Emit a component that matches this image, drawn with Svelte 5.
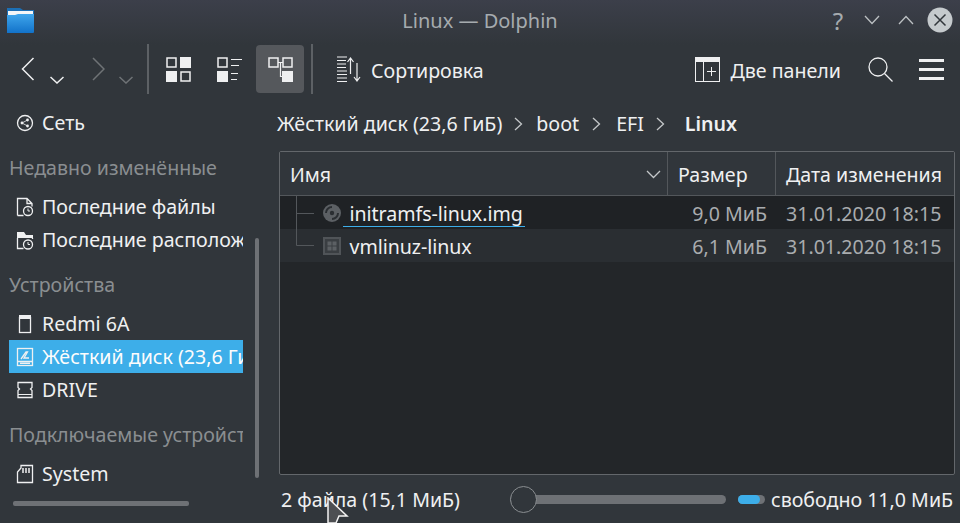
<script>
  const files = [
    { name: 'initramfs-linux.img', size: '9,0 МиБ', date: '31.01.2020 18:15', kind: 'img' },
    { name: 'vmlinuz-linux', size: '6,1 МиБ', date: '31.01.2020 18:15', kind: 'bin' }
  ];
</script>

<div class="window">
  <header class="titlebar">
    <svg class="app-icon" width="27" height="25" viewBox="0 0 27 25">
      <defs>
        <linearGradient id="fold" x1="0" y1="0" x2="0" y2="1">
          <stop offset="0" stop-color="#3fa6ec" />
          <stop offset="1" stop-color="#1272c9" />
        </linearGradient>
      </defs>
      <path d="M0 0h13l3 2h11v6H0z" fill="#1c6fb5" />
      <rect x="1" y="3" width="25" height="4" fill="#f4f6f8" />
      <path d="M0 7h8l3-1h16v18a1 1 0 0 1-1 1H0z" fill="url(#fold)" />
    </svg>
    <span class="title">Linux — Dolphin</span>
    <div class="win-btns">
      <span class="help">?</span>
      <svg width="16" height="10" viewBox="0 0 16 10"><path d="M1 1l7 7.500L15 1" class="wb" /></svg>
      <svg width="16" height="10" viewBox="0 0 16 10"><path d="M1 9l7-7.500L15 9" class="wb" /></svg>
      <svg width="26" height="26" viewBox="0 0 26 26">
        <circle cx="13" cy="13" r="12.500" fill="#c5cacd" />
        <path d="M7.500 7.500l11 11M18.500 7.500l-11 11" stroke="#31363b" stroke-width="1.500" fill="none" />
      </svg>
    </div>
  </header>

  <div class="toolbar">
    <div class="nav">
      <svg width="14" height="24" viewBox="0 0 14 24"><path d="M12.500 1L1.500 12l11 11" class="ic" /></svg>
      <svg class="drop" width="14" height="8" viewBox="0 0 14 8"><path d="M.5 1L7 7l6.500-6" class="ic" /></svg>
      <svg class="fwd" width="13" height="24" viewBox="0 0 13 24"><path d="M1 1l11 11L1 23" class="ic dim" /></svg>
      <svg class="drop2" width="14" height="8" viewBox="0 0 14 8"><path d="M.5 1L7 7l6.500-6" class="ic dim" /></svg>
    </div>
    <span class="sep"></span>
    <div class="views">
      <button class="view">
        <svg width="25" height="25" viewBox="0 0 25 25">
          <rect x="1" y="1" width="9" height="9" class="box" />
          <rect x="14" y="0" width="11" height="11" fill="#eff0f1" />
          <rect x="0" y="14" width="11" height="11" fill="#eff0f1" />
          <rect x="15" y="15" width="9" height="9" class="box" />
        </svg>
      </button>
      <button class="view">
        <svg width="25" height="25" viewBox="0 0 25 25">
          <rect x="1" y="1" width="9" height="9" class="box" />
          <path d="M14 2.500h11M14 8.500h8M14 16.500h7M14 22.500h6" stroke="#eff0f1" stroke-width="1.200" fill="none" />
          <rect x="0" y="14" width="11" height="11" fill="#eff0f1" />
        </svg>
      </button>
      <button class="view active">
        <svg width="25" height="25" viewBox="0 0 25 25">
          <rect x="1" y="1" width="9" height="9" class="box" />
          <rect x="15" y="1" width="9" height="9" class="box" />
          <rect x="14" y="14" width="11" height="11" fill="#eff0f1" />
          <path d="M10 5.500h5M12.500 5.500v14H14" stroke="#eff0f1" stroke-width="1.200" fill="none" />
        </svg>
      </button>
    </div>
    <span class="sep"></span>
    <button class="tool sort">
      <svg width="24" height="26" viewBox="0 0 24 26">
        <path d="M0 1h10M0 4.500h9M0 8h9M0 11.500h9M0 15h10M0 18.500h10M0 22h10M0 25.500h10" stroke="#eff0f1" stroke-width="1.100" fill="none" />
        <path d="M13.500 18V2M10.500 6l3-4 3 4M20 7v18M17 21l3 4 3-4" stroke="#eff0f1" stroke-width="1.200" fill="none" />
      </svg>
      <span class="label">Сортировка</span>
    </button>
    <button class="tool panels">
      <svg width="25" height="25" viewBox="0 0 25 25">
        <rect x="0.500" y="0.500" width="24" height="24" fill="none" stroke="#eff0f1" />
        <rect x="0" y="0" width="25" height="5" fill="#eff0f1" />
        <path d="M8.500 5v19.500M16.500 10v9M12 14.500h9" stroke="#eff0f1" fill="none" />
      </svg>
      <span class="label">Две панели</span>
    </button>
    <svg class="search" width="25" height="25" viewBox="0 0 25 25">
      <circle cx="10" cy="10" r="9" fill="none" stroke="#eff0f1" stroke-width="1.300" />
      <path d="M16.500 16.500l8 8" stroke="#eff0f1" stroke-width="1.300" />
    </svg>
    <svg class="menu" width="25" height="21" viewBox="0 0 25 21">
      <path d="M0 1.500h25M0 10.500h25M0 19.500h25" stroke="#eff0f1" stroke-width="3" />
    </svg>
  </div>

  <div class="body">
    <aside class="places">
      <div class="places-list">
        <div class="item first">
          <svg width="18" height="18" viewBox="0 0 18 18">
            <circle cx="9" cy="9" r="7.500" class="pl" />
            <circle cx="6" cy="9" r="1.400" fill="#eff0f1" /><circle cx="11.500" cy="6" r="1.400" fill="#eff0f1" /><circle cx="11.500" cy="12" r="1.400" fill="#eff0f1" />
            <path d="M6 9l5.500-3M6 9l5.500 3" stroke="#eff0f1" stroke-width=".8" />
          </svg>
          Сеть
        </div>
        <div class="group">Недавно изменённые</div>
        <div class="item">
          <svg width="18" height="20" viewBox="0 0 18 20">
            <path d="M1.500 18.500V1.500H11l5 5v3M1.500 18.500h6M11 1.500v5h5" class="pl" />
            <circle cx="12" cy="14" r="4.500" class="pl" stroke-width="1.800" /><path d="M12 11.500V14h2" stroke="#eff0f1" fill="none" />
          </svg>
          Последние файлы
        </div>
        <div class="item">
          <svg width="18" height="20" viewBox="0 0 18 20">
            <path d="M1 2h7l2 3h7v3H1z" fill="#eff0f1" />
            <path d="M1.500 8v10.500h6M16.500 8v1" class="pl" />
            <circle cx="12" cy="14.500" r="4.500" class="pl" stroke-width="1.800" /><path d="M12 12v2.500h2" stroke="#eff0f1" fill="none" />
          </svg>
          Последние располож
        </div>
        <div class="group">Устройства</div>
        <div class="item">
          <svg width="18" height="20" viewBox="0 0 18 20">
            <rect x="3.500" y="3.500" width="11" height="15" class="pl" stroke-width="2" />
            <rect x="3" y="1" width="12" height="4" fill="#eff0f1" />
          </svg>
          Redmi 6A
        </div>
        <div class="item selected">
          <svg width="18" height="20" viewBox="0 0 18 20">
            <rect x="1.500" y="1.500" width="15" height="17" class="pl" stroke-width="1.500" />
            <path d="M5 12l5-7h1.500L8 11h5M1 14.500h16" class="pl" />
            <rect x="4" y="15.500" width="10" height="1.500" fill="#eff0f1" />
          </svg>
          Жёсткий диск (23,6 ГиБ)
        </div>
        <div class="item">
          <svg width="18" height="20" viewBox="0 0 18 20">
            <path d="M2 2.500h14v5l-1.500 1.500L16 10.500v7H2v-7L3.500 9 2 7.500z" class="pl" stroke-width="1.800" />
            <path d="M2 14.500h14" stroke="#eff0f1" />
          </svg>
          DRIVE
        </div>
        <div class="group">Подключаемые устройства</div>
        <div class="item">
          <svg width="18" height="20" viewBox="0 0 18 20">
            <path d="M1.500 18.500V8L5 4V1.500h11.500v17z" class="pl" />
            <path d="M7 4v5M10 4v5M13 4v5" stroke="#eff0f1" stroke-width="1.500" />
          </svg>
          System
        </div>
      </div>
      <span class="vscroll"></span>
      <span class="hscroll"></span>
    </aside>

    <main class="content">
      <nav class="crumbs">
        <span class="first-crumb">Жёсткий диск (23,6 ГиБ)</span>
        <svg width="9" height="14" viewBox="0 0 9 14"><path d="M1 1l6.500 6L1 13" class="crumb-arrow" /></svg>
        <span class="boot">boot</span>
        <svg width="9" height="14" viewBox="0 0 9 14"><path d="M1 1l6.500 6L1 13" class="crumb-arrow" /></svg>
        <span>EFI</span>
        <svg width="9" height="14" viewBox="0 0 9 14"><path d="M1 1l6.500 6L1 13" class="crumb-arrow" /></svg>
        <span class="current">Linux</span>
      </nav>

      <section class="table">
        <div class="thead">
          <div class="th name">Имя
            <svg width="15" height="9" viewBox="0 0 15 9"><path d="M1 1l6.500 6.500L14 1" class="crumb-arrow" /></svg>
          </div>
          <div class="th size">Размер</div>
          <div class="th date">Дата изменения</div>
        </div>
        {#each files as file, i}
          <div class="row" class:alt={i === 1}>
            <div class="cell namecell">
              <svg class="tree" width="18" height="33" viewBox="0 0 18 33">
                {#if i === 0}
                  <path d="M0.500 0v33M0.500 17.500H18" stroke="#53575b" fill="none" />
                {:else}
                  <path d="M0.500 0v16.500H18" stroke="#53575b" fill="none" />
                {/if}
              </svg>
              {#if file.kind === 'img'}
                <svg class="ficon" width="18" height="18" viewBox="0 0 18 18">
                  <circle cx="9" cy="9" r="9" fill="#5c6064" />
                  <circle cx="9" cy="9" r="2.200" fill="#2a2e32" />
                  <path d="M3 9a6 6 0 0 1 6-6M15 9a6 6 0 0 1-6 6" stroke="#2a2e32" stroke-width="2" fill="none" />
                </svg>
              {:else}
                <svg class="ficon" width="18" height="18" viewBox="0 0 18 18">
                  <rect width="18" height="18" fill="#505458" />
                  <rect x="2" y="2" width="14" height="14" fill="#3a3e42" />
                  <rect x="4.500" y="4.500" width="4" height="4" fill="#5c6064" /><rect x="9.500" y="4.500" width="4" height="4" fill="#5c6064" />
                  <rect x="4.500" y="9.500" width="4" height="4" fill="#5c6064" /><rect x="9.500" y="9.500" width="4" height="4" fill="#5c6064" />
                </svg>
              {/if}
              <span class="fname" class:focused={i === 0}>{file.name}</span>
            </div>
            <div class="cell sizecell">{file.size}</div>
            <div class="cell datecell">{file.date}</div>
          </div>
        {/each}
      </section>

      <footer class="status">
        <span class="count">2 файла (15,1 МиБ)</span>
        <div class="slider"><span class="knob"></span></div>
        <div class="free"><span class="free-fill"></span></div>
        <span class="free-text">свободно 11,0 МиБ</span>
      </footer>
    </main>
  </div>

  <svg class="cursor" width="22" height="27" viewBox="0 0 22 27">
    <path d="M1 1l19 18-8 0-3 7H1z" fill="#4d4f52" stroke="#f2f2f2" stroke-width="1.500" />
  </svg>
</div>

<style>
  :global(body) {
    margin: 0;
    background: #31363b;
  }

  .window {
    position: relative;
    width: 960px;
    height: 523px;
    overflow: hidden;
    display: flex;
    flex-direction: column;
    background: linear-gradient(#3c3f4a 0, #31363b 45px);
    color: #eff0f1;
    font-family: "Noto Sans", sans-serif;
    font-size: 19.6px;
    line-height: 27px;
  }

  .titlebar {
    height: 40px;
    flex: none;
    display: flex;
    align-items: center;
    position: relative;
    padding: 0 7px;
  }

  .title {
    position: absolute;
    left: 0;
    right: 0;
    text-align: center;
    color: #a6abaf;
    font-size: 20px;
  }

  .win-btns {
    margin-left: auto;
    display: flex;
    align-items: center;
    gap: 18px;
  }

  .help {
    color: #a6abaf;
    font-size: 24px;
    width: 16px;
    text-align: center;
  }

  .win-btns svg:last-child {
    margin-left: -5px;
  }

  .wb {
    stroke: #bcc0c3;
    stroke-width: 1.300;
    fill: none;
  }

  .toolbar {
    height: 58px;
    flex: none;
    display: flex;
    align-items: center;
    margin-bottom: 2px;
  }

  .ic {
    stroke: #eff0f1;
    stroke-width: 1.500;
    fill: none;
  }

  .ic.dim {
    stroke: #6f7376;
  }

  .nav {
    width: 147px;
    height: 48px;
    padding-left: 21px;
    box-sizing: border-box;
    display: flex;
    align-items: center;
  }

  .nav .drop {
    margin: 22px 0 0 15px;
  }

  .nav .fwd {
    margin-left: 28px;
  }

  .nav .drop2 {
    margin: 22px 0 0 14px;
  }

  .sep {
    width: 2px;
    height: 50px;
    background: #5d6165;
    flex: none;
  }

  .views {
    display: flex;
    gap: 3px;
    padding: 0 7px 0 5px;
  }

  .view {
    width: 48px;
    height: 48px;
    padding: 0;
    border: 0;
    background: none;
    display: flex;
    align-items: center;
    justify-content: center;
    border-radius: 4px;
  }

  .view.active {
    background: #55585c;
  }

  .box {
    fill: none;
    stroke: #eff0f1;
    stroke-width: 1.500;
  }

  .tool {
    display: flex;
    align-items: center;
    gap: 11px;
    padding: 0;
    border: 0;
    background: none;
    color: inherit;
    font: inherit;
  }

  .label {
    position: relative;
    top: 1px;
  }

  .sort {
    margin-left: 24px;
    gap: 10px;
  }

  .panels {
    margin-left: auto;
  }

  .search {
    margin-left: 27px;
  }

  .menu {
    margin: 0 16px 0 26px;
  }

  .body {
    flex: 1;
    display: flex;
    min-height: 0;
  }

  .places {
    width: 279px;
    flex: none;
    position: relative;
  }

  .places-list {
    width: 234px;
    margin-left: 9px;
    overflow: hidden;
    white-space: nowrap;
    padding-top: 6px;
  }

  .item {
    height: 33px;
    display: flex;
    align-items: center;
    padding-left: 7px;
    box-sizing: border-box;
    overflow: hidden;
  }

  .item svg {
    flex: none;
    margin-right: 8px;
  }

  .item.first {
    margin-bottom: 12px;
  }

  .item.selected {
    background: #3daee9;
    color: #fcfcfc;
  }

  .group {
    height: 33px;
    line-height: 33px;
    color: #8a8e91;
    margin-bottom: 6px;
  }

  .item + .item + .group {
    margin-top: 12px;
  }

  .pl {
    fill: none;
    stroke: #eff0f1;
    stroke-width: 1.300;
  }

  .vscroll {
    position: absolute;
    left: 255px;
    top: 138px;
    width: 4px;
    height: 240px;
    border-radius: 2px;
    background: #6e7175;
  }

  .hscroll {
    position: absolute;
    left: 13px;
    top: 401px;
    width: 176px;
    height: 5px;
    border-radius: 2px;
    background: #6e7175;
  }

  .content {
    flex: 1;
    min-width: 0;
    display: flex;
    flex-direction: column;
    padding-right: 5px;
  }

  .crumbs {
    height: 51px;
    flex: none;
    display: flex;
    align-items: center;
    padding-bottom: 4px;
    box-sizing: border-box;
  }

  .first-crumb {
    margin-left: -2px;
  }

  .crumbs svg {
    margin: 0 15px 0 12px;
  }

  .boot {
    margin: 0 1px 0 -2px;
  }

  .crumb-arrow {
    fill: none;
    stroke: #c4c7c9;
    stroke-width: 1.300;
  }

  .current {
    font-weight: 600;
    margin-left: 5px;
  }

  .table {
    flex: 1;
    min-height: 0;
    background: #232629;
    border: 1px solid #63676b;
    border-radius: 2px;
    box-sizing: border-box;
  }

  .thead {
    display: grid;
    grid-template-columns: 388px 108px 1fr;
    height: 44px;
    background: #31363b;
    border-bottom: 1px solid #53575b;
    box-sizing: border-box;
  }

  .th {
    display: flex;
    align-items: center;
    padding: 2px 0 0 10px;
    border-right: 1px solid #53575b;
    box-sizing: border-box;
  }

  .th:last-child {
    border-right: 0;
  }

  .th.name {
    justify-content: space-between;
    padding-right: 6px;
  }

  .row {
    display: grid;
    grid-template-columns: 388px 108px 1fr;
    height: 33px;
    background: #1f2225;
    color: #a9acaf;
    overflow: hidden;
  }

  .row.alt {
    background: #2a2e32;
  }

  .cell {
    display: flex;
    align-items: center;
    height: 33px;
  }

  .sizecell,
  .datecell {
    padding-top: 1px;
  }

  .namecell {
    padding-left: 16px;
  }

  .tree {
    flex: none;
  }

  .ficon {
    margin-left: 9px;
    flex: none;
  }

  .fname {
    margin-left: 8.500px;
    color: #eff0f1;
    position: relative;
    top: 1px;
    letter-spacing: -0.05px;
  }

  .fname.focused::after {
    content: '';
    position: absolute;
    left: -7px;
    right: -2px;
    bottom: 0;
    height: 1px;
    background: #3daee9;
  }

  .sizecell {
    justify-content: flex-end;
    padding-right: 9px;
  }

  .datecell {
    padding-left: 10px;
  }

  .status {
    height: 48px;
    flex: none;
    display: flex;
    align-items: center;
    white-space: nowrap;
  }

  .count {
    margin-left: 2px;
    width: 229px;
    flex: none;
  }

  .slider {
    width: 216px;
    height: 9px;
    border-radius: 5px;
    background: #6e7175;
    position: relative;
    margin-right: 12px;
    flex: none;
  }

  .knob {
    position: absolute;
    left: 0;
    top: -9px;
    width: 25px;
    height: 25px;
    border: 1px solid #8a8e91;
    border-radius: 50%;
    background: #31363b;
  }

  .free {
    width: 27px;
    height: 9px;
    border-radius: 5px;
    background: #6e7175;
    margin-right: 6px;
    flex: none;
  }

  .free-fill {
    display: block;
    width: 22px;
    height: 9px;
    border-radius: 5px;
    background: #3daee9;
  }

  .cursor {
    position: absolute;
    left: 327px;
    top: 497px;
  }
</style>
